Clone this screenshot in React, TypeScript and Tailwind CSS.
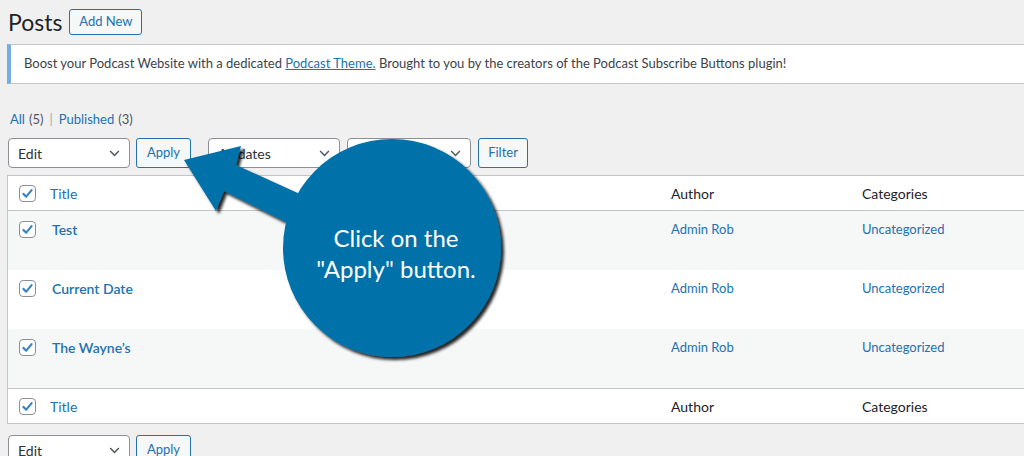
import React from "react";

const font = { fontFamily: "Lato, 'Open Sans', sans-serif" };

const Check = () => (
  <span className="flex h-[17px] w-[17px] shrink-0 items-center justify-center rounded-[4px] border border-[#8c8f94] bg-white">
    <svg viewBox="0 0 20 20" className="h-[15px] w-[15px]">
      <path d="M4.5 10.5 L8.3 14.2 L15.5 5.5" fill="none" stroke="#3582c4" strokeWidth="2.8" strokeLinecap="round" strokeLinejoin="round" />
    </svg>
  </span>
);

const Chevron = () => (
  <svg viewBox="0 0 12 8" className="h-[7px] w-[11px]">
    <path d="M1 1.2 L6 6.2 L11 1.2" fill="none" stroke="#50575e" strokeWidth="1.7" />
  </svg>
);

const Select = ({ w, label }: { w: string; label: string }) => (
  <div className={`${w} flex h-[30px] shrink-0 items-center justify-between rounded-[4px] border border-[#8c8f94] bg-white pl-[9px] pr-[9px] text-[14px] text-[#2c3338]`}>
    <span>{label}</span>
    <Chevron />
  </div>
);

const Btn = ({ w, label }: { w: string; label: string }) => (
  <div className={`${w} flex h-[30px] shrink-0 items-center justify-center rounded-[3px] border border-[#2271b1] bg-[#f6f7f7] text-[13px] text-[#2271b1]`}>
    {label}
  </div>
);

const HeadRow = ({ border }: { border: "b" | "t" }) => (
  <div className={`flex h-[35px] items-center bg-white ${border === "b" ? "border-b" : "border-t"} border-[#c3c4c7] text-[14px]`}>
    <div className="flex w-[42px] shrink-0 pl-[11px]">
      <Check />
    </div>
    <div className="w-[621px] shrink-0 text-[#2271b1]">Title</div>
    <div className="w-[191px] shrink-0 text-[#1d2327]">Author</div>
    <div className="text-[#1d2327]">Categories</div>
  </div>
);

const Row = ({ title, alt }: { title: string; alt: boolean }) => (
  <div className={`flex h-[59px] items-start ${alt ? "bg-[#f6f7f7]" : "bg-white"}`}>
    <div className="flex w-[42px] shrink-0 pl-[11px] pt-[10px]">
      <Check />
    </div>
    <div className="w-[621px] shrink-0 pl-[2px] pt-[8px] text-[14px] font-semibold text-[#2271b1]">{title}</div>
    <div className="w-[191px] shrink-0 pt-[9px] text-[13px] text-[#2271b1]">Admin Rob</div>
    <div className="pt-[9px] text-[13px] text-[#2271b1]">Uncategorized</div>
  </div>
);

export default function App() {
  return (
    <div className="relative h-[456px] w-[1024px] overflow-hidden bg-[#f0f0f1]" style={font}>
      <div className="flex h-[44px] items-start pl-[8px] pt-[9px]">
        <h1 className="mr-[7px] text-[23px] leading-[26px] text-[#1d2327]">Posts</h1>
        <div className="flex h-[26px] w-[73px] items-center justify-center rounded-[3px] border border-[#2271b1] bg-[#f6f7f7] text-[13px] text-[#2271b1]">
          Add New
        </div>
      </div>

      <div className="ml-[7px] flex h-[40px] w-[1030px] items-center border-y border-l-4 border-[#c3c4c7] border-l-[#72aee6] bg-white pl-[13px] text-[13px] text-[#3c434a]">
        <span>
          Boost your Podcast Website with a dedicated{" "}
          <span className="text-[#2271b1] underline">Podcast Theme.</span> Brought to you by the creators of the Podcast Subscribe
          Buttons plugin!
        </span>
      </div>

      <div className="flex h-[45px] items-end pl-[10px] text-[13px]">
        <span className="text-[#2271b1]">All</span>
        <span className="ml-[4px] text-[#50575e]">(5)</span>
        <span className="mx-[6px] text-[#a7aaad]">|</span>
        <span className="text-[#2271b1]">Published</span>
        <span className="ml-[4px] text-[#50575e]">(3)</span>
      </div>

      <div className="mt-[9px] flex items-center pl-[8px]">
        <Select w="w-[122px]" label="Edit" />
        <div className="ml-[6px]">
          <Btn w="w-[55px]" label="Apply" />
        </div>
        <div className="ml-[17px]">
          <Select w="w-[132px]" label="All dates" />
        </div>
        <div className="ml-[7px]">
          <Select w="w-[124px]" label="All Categories" />
        </div>
        <div className="ml-[7px]">
          <Btn w="w-[50px]" label="Filter" />
        </div>
      </div>

      <div className="ml-[7px] mt-[7px] w-[1030px] border border-[#c3c4c7] bg-white">
        <HeadRow border="b" />
        <Row title="Test" alt />
        <Row title="Current Date" alt={false} />
        <Row title="The Wayne’s" alt />
        <HeadRow border="t" />
      </div>

      <div className="mt-[11px] flex items-center pl-[8px]">
        <Select w="w-[122px]" label="Edit" />
        <div className="ml-[6px]">
          <Btn w="w-[55px]" label="Apply" />
        </div>
      </div>

      <svg className="pointer-events-none absolute left-0 top-0" width="1024" height="456" viewBox="0 0 1024 456">
        <defs>
          <filter id="sh" x="-20%" y="-20%" width="140%" height="140%">
            <feDropShadow dx="3" dy="3" stdDeviation="1.6" floodColor="#000" floodOpacity="0.85" />
          </filter>
        </defs>
        <g filter="url(#sh)" fill="#0071a9">
          <path d="M184 160 L241 146 L236 165 L302 195 L290 224 L224 191 L216 211 Z" />
          <circle cx="392" cy="248" r="109" />
        </g>
      </svg>
      <div
        className="pointer-events-none absolute left-[296px] top-[222px] w-[200px] text-center text-[24px] leading-[31px] text-white"
        style={{ fontFamily: "Lato, 'Open Sans', sans-serif" }}
      >
        Click on the
        <br />
        "Apply" button.
      </div>
    </div>
  );
}
